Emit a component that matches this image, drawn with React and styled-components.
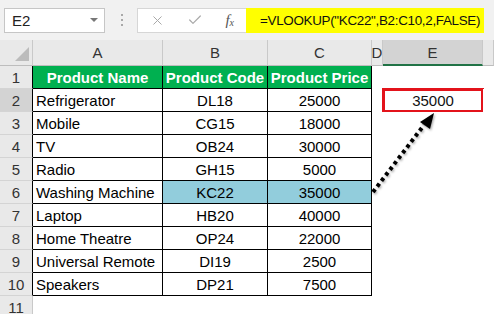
import styled, { createGlobalStyle } from "styled-components";
import { X, Check } from "lucide-react";

const GlobalStyle = createGlobalStyle`
  html, body {
    margin: 0;
    padding: 0;
    background: #ffffff;
  }
  body {
    font-family: "Liberation Sans", Arial, sans-serif;
    color: #000;
  }
`;

const Page = styled.div`
  position: relative;
  width: 494px;
  height: 314px;
  overflow: hidden;
  background: #fff;
`;

const Toolbar = styled.div`
  display: flex;
  align-items: center;
  height: 40px;
  padding: 0 10px 0 4px;
  background: #f1f1f1;
  box-sizing: border-box;
`;

const NameBox = styled.div`
  flex: none;
  display: flex;
  align-items: center;
  justify-content: space-between;
  width: 101px;
  height: 25px;
  box-sizing: border-box;
  padding: 0 6px 0 7px;
  background: #fff;
  border: 1px solid #c6c6c6;
  font-size: 15px;
  color: #222;
`;

const Caret = styled.span`
  width: 0;
  height: 0;
  border-left: 4px solid transparent;
  border-right: 4px solid transparent;
  border-top: 4px solid #777;
`;

const Grip = styled.div`
  flex: none;
  display: flex;
  flex-direction: column;
  gap: 3px;
  margin: 0 14px 0 16px;

  span {
    width: 2px;
    height: 2px;
    background: #a8a8a8;
  }
`;

const FxButtons = styled.div`
  flex: none;
  display: flex;
  align-items: center;
  width: 109px;
  height: 25px;
  box-sizing: border-box;
  padding: 0 12px 0 12px;
  justify-content: space-between;
  background: #fff;
  border: 1px solid #d6d6d6;
  border-right: none;
  color: #a9a9a9;
`;

const Fx = styled.span`
  font-family: "Liberation Serif", "Times New Roman", serif;
  font-style: italic;
  font-size: 15px;
  color: #555;

  sub {
    font-size: 10px;
    vertical-align: -1px;
  }
`;

const Formula = styled.div`
  flex: 1;
  min-width: 0;
  display: flex;
  align-items: center;
  height: 25px;
  box-sizing: border-box;
  padding-left: 14px;
  background: #ffff00;
  font-size: 13.4px;
  letter-spacing: -0.3px;
  color: #111;
  white-space: nowrap;
`;

const Sheet = styled.div`
  display: grid;
  grid-template-columns: 33px 130px 105px 104px 11px 100px 1fr;
  grid-template-rows: 26px;
  grid-auto-rows: 23px;
`;

const Corner = styled.div`
  position: relative;
  background: #e9e9e9;
  border-right: 1px solid #c9c9c9;
  border-bottom: 1px solid #bdbdbd;
  box-sizing: border-box;

  &::after {
    content: "";
    position: absolute;
    right: 3px;
    bottom: 4px;
    width: 0;
    height: 0;
    border-left: 14px solid transparent;
    border-bottom: 14px solid #bcbcbc;
  }
`;

const ColHead = styled.div`
  display: flex;
  align-items: center;
  justify-content: center;
  box-sizing: border-box;
  background: ${(p) => (p.$active ? "#d3d3d3" : "#e9e9e9")};
  border-right: 1px solid #c9c9c9;
  border-bottom: ${(p) => (p.$active ? "2px solid #217346" : "1px solid #bdbdbd")};
  font-size: 15px;
  color: #333;
  overflow: hidden;
`;

const RowHead = styled.div`
  display: flex;
  align-items: center;
  justify-content: center;
  box-sizing: border-box;
  background: ${(p) => (p.$active ? "#d3d3d3" : "#e9e9e9")};
  border-right: 1px solid ${(p) => (p.$edge ? "#000" : "#c9c9c9")};
  border-bottom: 1px solid #d4d4d4;
  font-size: 15px;
  color: #333;
`;

const Cell = styled.div`
  display: flex;
  align-items: center;
  justify-content: ${(p) => (p.$center ? "center" : "flex-start")};
  box-sizing: border-box;
  padding: 0 3px;
  font-size: 15px;
  font-weight: ${(p) => (p.$head ? 700 : 400)};
  color: ${(p) => (p.$head ? "#fff" : "#000")};
  background: ${(p) => (p.$head ? "#00b050" : p.$hl ? "#92cddc" : "#fff")};
  border-right: ${(p) => (p.$table ? "1px solid #000" : "none")};
  border-bottom: ${(p) => (p.$table ? "1px solid #000" : "none")};
  white-space: nowrap;
  overflow: hidden;
`;

const ResultCell = styled(Cell)`
  outline: 3px solid #e3131b;
  outline-offset: -2px;
  color: #111;
`;

const Arrow = styled.svg`
  position: absolute;
  left: 0;
  top: 0;
  pointer-events: none;
`;

const products = [
  ["Refrigerator", "DL18", "25000"],
  ["Mobile", "CG15", "18000"],
  ["TV", "OB24", "30000"],
  ["Radio", "GH15", "5000"],
  ["Washing Machine", "KC22", "35000"],
  ["Laptop", "HB20", "40000"],
  ["Home Theatre", "OP24", "22000"],
  ["Universal Remote", "DI19", "2500"],
  ["Speakers", "DP21", "7500"],
];

const letters = ["A", "B", "C", "D", "E", ""];

export default function App() {
  return (
    <Page>
      <GlobalStyle />
      <Toolbar>
        <NameBox>
          E2
          <Caret />
        </NameBox>
        <Grip>
          <span />
          <span />
          <span />
        </Grip>
        <FxButtons>
          <X size={15} strokeWidth={1.6} />
          <Check size={16} strokeWidth={1.8} />
          <Fx>
            f<sub>x</sub>
          </Fx>
        </FxButtons>
        <Formula>=VLOOKUP("KC22",B2:C10,2,FALSE)</Formula>
      </Toolbar>

      <Sheet>
        <Corner />
        {letters.map((l, i) => (
          <ColHead key={i} $active={l === "E"}>
            {l}
          </ColHead>
        ))}

        <RowHead $edge>1</RowHead>
        <Cell $head $table $center>Product Name</Cell>
        <Cell $head $table $center>Product Code</Cell>
        <Cell $head $table $center>Product Price</Cell>
        <Cell />
        <Cell />
        <Cell />

        {products.map(([name, code, price], i) => {
          const hl = code === "KC22";
          return [
            <RowHead key={`h${i}`} $edge $active={i === 0}>
              {i + 2}
            </RowHead>,
            <Cell key={`a${i}`} $table>{name}</Cell>,
            <Cell key={`b${i}`} $table $center $hl={hl}>{code}</Cell>,
            <Cell key={`c${i}`} $table $center $hl={hl}>{price}</Cell>,
            <Cell key={`d${i}`} />,
            i === 0 ? (
              <ResultCell key={`e${i}`} $center>35000</ResultCell>
            ) : (
              <Cell key={`e${i}`} />
            ),
            <Cell key={`f${i}`} />,
          ];
        })}

        <RowHead>11</RowHead>
      </Sheet>

      <Arrow width="494" height="314" viewBox="0 0 494 314">
        <defs>
          <filter id="soft" x="-20%" y="-20%" width="140%" height="140%">
            <feDropShadow dx="1" dy="1.5" stdDeviation="1" floodColor="#000" floodOpacity="0.35" />
          </filter>
        </defs>
        <g filter="url(#soft)">
          <line
            x1="373"
            y1="192"
            x2="424"
            y2="125"
            stroke="#000"
            strokeWidth="4"
            strokeDasharray="3.5 3.5"
          />
          <polygon points="434,113 420,122 430,129" fill="#000" />
        </g>
      </Arrow>
    </Page>
  );
}
